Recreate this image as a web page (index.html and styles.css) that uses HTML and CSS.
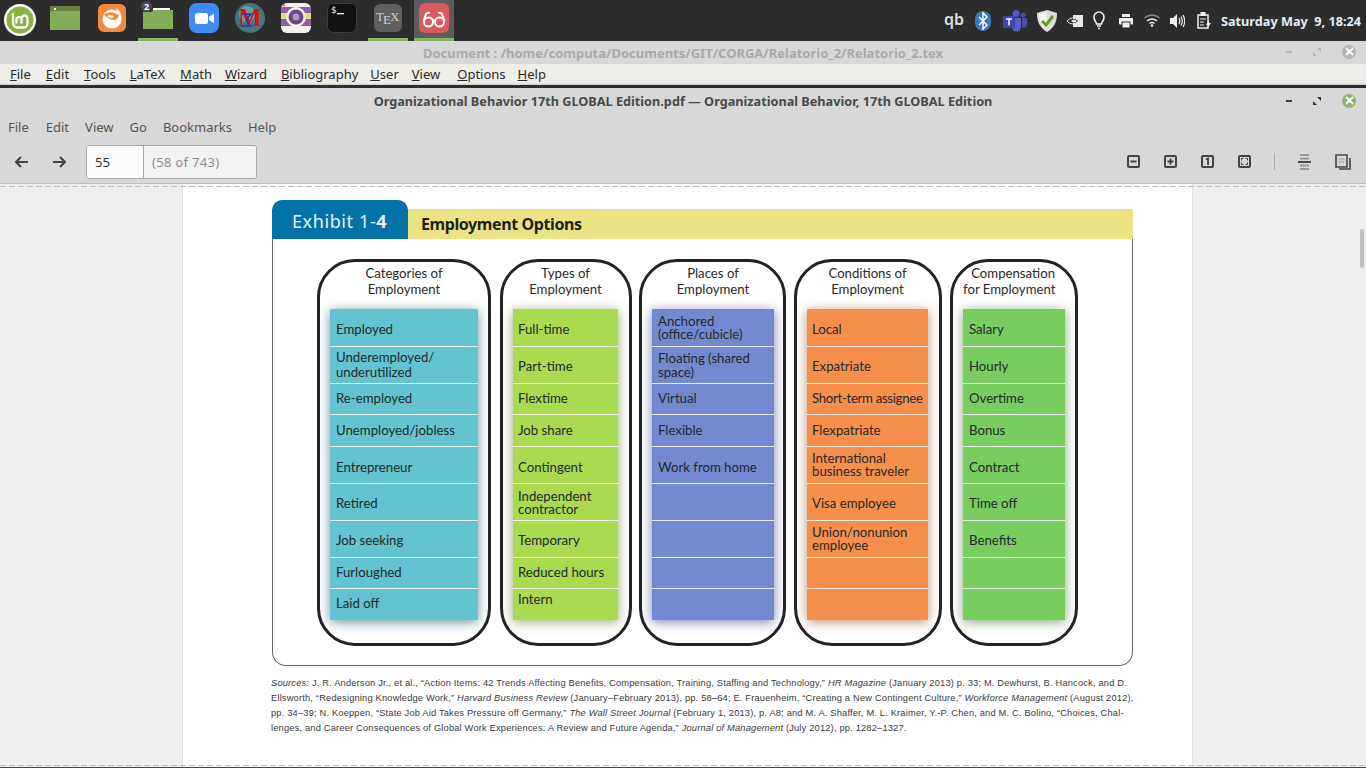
FILE: index.html
```html
<!DOCTYPE html>
<html lang="en">
<head>
  <meta charset="UTF-8" />
  <meta name="viewport" content="width=device-width, initial-scale=1.0"/>
  <title>Organizational Behavior 17th GLOBAL Edition.pdf</title>
  <link rel="stylesheet" href="styles.css">
</head>
<body>

  <!-- panel -->
  <div class="panel">
    <div class="dock">
      <div class="dock-item dock-mint">
        <svg width="34" height="34" viewBox="0 0 34 34"><circle cx="17" cy="17" r="16" fill="#fff"/><circle cx="17" cy="17" r="13.6" fill="#86b343"/><path d="M10 10v10a4.5 4.5 0 0 0 4.5 4.5h6a4 4 0 0 0 4-4v-5a3 3 0 0 0-6 0v5m0-5a3 3 0 0 0-5 0v5" fill="none" stroke="#fff" stroke-width="2.3"/></svg>
      </div>
      <div class="dock-item dock-files">
        <svg width="30" height="24" viewBox="0 0 30 24"><rect width="30" height="24" fill="#86ab57"/><rect width="30" height="5" fill="#64823f"/><rect x="4" y="2" width="2" height="2" fill="#fff"/></svg>
      </div>
      <div class="dock-item">
        <svg width="30" height="30" viewBox="0 0 30 30"><rect x="1" y="1" width="28" height="28" rx="6" fill="#f18a3a"/><circle cx="15" cy="16" r="9.5" fill="#fff"/><path d="M19 5q6 4 5.5 11l-3-4z" fill="#fff"/><path d="M7 11q7-4 15 1-1 5-6 5-6-1-9-6z" fill="#f18a3a"/><path d="M10 13q4-2 7 0-1 2-3 2-2 0-4-2z" fill="#fff"/></svg>
      </div>
      <div class="dock-item dock-running dock-badged">
        <svg width="30" height="24" viewBox="0 0 30 24"><path d="M10 2h17v3H10z" fill="#fff"/><path d="M0 6h8l3-2h19v19H0z" fill="#86ab57"/></svg>
        <span class="dock-badge">2</span>
      </div>
      <div class="dock-item">
        <svg width="30" height="30" viewBox="0 0 30 30"><rect width="30" height="30" rx="8" fill="#3d8cf5"/><rect x="6" y="10" width="13" height="11" rx="2.5" fill="#fff"/><path d="M20 14l5-3.5v10L20 17z" fill="#fff"/></svg>
      </div>
      <div class="dock-item">
        <svg width="32" height="32" viewBox="0 0 32 32"><circle cx="16" cy="16" r="15" fill="#47737f"/><circle cx="13" cy="12" r="8" fill="#8fb0b8" opacity=".6"/><text x="16" y="24" text-anchor="middle" class="svg-maxima" fill="#d41414">M</text><path d="M8 12h9l-5 6 5 6H7" fill="none" stroke="#1c3fa8" stroke-width="1.5"/></svg>
      </div>
      <div class="dock-item">
        <svg width="30" height="30" viewBox="0 0 30 30"><rect width="30" height="30" rx="6" fill="#f4f1ea"/><rect y="4" width="30" height="6" fill="#8d5fb0"/><rect y="10" width="30" height="6" fill="#e3dc7f"/><rect y="16" width="30" height="7" fill="#8d5fb0"/><circle cx="15" cy="14" r="10" fill="#f4f1ea"/><circle cx="15" cy="14" r="7.5" fill="#6a4a86"/><circle cx="15" cy="14" r="3.5" fill="#ad97c2"/><circle cx="3" cy="2.5" r="1.2" fill="#e86a6a"/></svg>
      </div>
      <div class="dock-item">
        <svg width="30" height="30" viewBox="0 0 30 30"><rect x=".5" y=".5" width="29" height="29" rx="6" fill="#111" stroke="#3e3e3e"/><text x="4" y="10" class="svg-term" fill="#fff">$</text><rect x="10" y="10" width="7" height="1.3" fill="#fff"/></svg>
      </div>
      <div class="dock-item dock-running">
        <svg width="30" height="30" viewBox="0 0 30 30"><rect x="1" y="1" width="28" height="28" rx="6" fill="#5f5f5f"/><text x="3" y="18" class="svg-tex" fill="#cfcfcf">T<tspan dy="3" dx="-1">E</tspan><tspan dy="-3" dx="-1">X</tspan></text></svg>
      </div>
      <div class="dock-item dock-running dock-active">
        <svg width="30" height="30" viewBox="0 0 30 30"><rect width="30" height="30" rx="6" fill="#d9595f"/><g fill="none" stroke="#fff" stroke-width="2"><circle cx="9.5" cy="19" r="4.5"/><circle cx="20.5" cy="19" r="4.5"/><path d="M13.5 18q1.5-1 3 0M4.5 18l2.5-7q1-1.5 4-1M25.5 18l-2.5-7q-1-1.5-4-1"/></g></svg>
      </div>
    </div>

    <div class="tray">
      <span class="tray-qb">qb</span>
      <svg class="tray-bt" width="16" height="20" viewBox="0 0 16 20"><rect width="16" height="20" rx="8" fill="#3a77b8"/><path d="M4 6l8 8-4 4V2l4 4-8 8" fill="none" stroke="#fff" stroke-width="1.4"/></svg>
      <svg class="tray-teams" width="24" height="22" viewBox="0 0 24 22"><circle cx="13" cy="3.5" r="3.5" fill="#5559c8"/><circle cx="20" cy="5" r="2.5" fill="#4a4ea8"/><path d="M9 8h9v9a4.5 4.5 0 0 1-9 0z" fill="#5a5fc8"/><path d="M19 8h5v7a3 3 0 0 1-5 2z" fill="#4a4ea8"/><rect y="6" width="12" height="12" rx="1" fill="#3f44b0"/><path d="M3 9h6M6 9v6.5" stroke="#fff" stroke-width="1.5"/></svg>
      <svg class="tray-shield" width="20" height="22" viewBox="0 0 20 22"><path d="M10 0l10 3c0 9-3 15-10 19C3 18 0 12 0 3z" fill="#ddd"/><path d="M10 2l-8 2.5c0 7 3 12 8 15z" fill="#f2f2f2"/><path d="M5 11l4 4 7-9" fill="none" stroke="#6a9a22" stroke-width="3"/></svg>
      <svg class="tray-nvidia" width="16" height="12" viewBox="0 0 16 12"><rect x="6" width="10" height="12" fill="#e8e8e8"/><path d="M0 6q5-6 12 0-7 6-12 0z" fill="#2c2c2c" stroke="#e8e8e8"/><path d="M4 6q3-3 6 0-3 3-6 0z" fill="#e8e8e8"/></svg>
      <svg class="tray-bulb" width="12" height="19" viewBox="0 0 12 19"><path d="M3.5 13c0-2-2.5-3-2.5-7a5 5 0 0 1 10 0c0 4-2.5 5-2.5 7z" fill="none" stroke="#f0f0f0" stroke-width="1.6"/><path d="M4 15h4M5 17.5h2" stroke="#f0f0f0" stroke-width="1.4"/></svg>
      <svg class="tray-print" width="14" height="14" viewBox="0 0 14 14"><rect x="3" width="8" height="3" fill="#f0f0f0"/><rect y="4" width="14" height="6.5" rx="1" fill="#f0f0f0"/><rect x="3" y="8" width="8" height="6" fill="#f0f0f0" stroke="#2c2c2c"/></svg>
      <svg class="tray-wifi" width="16" height="13" viewBox="0 0 16 13"><g fill="none" stroke-width="1.5"><path d="M.5 4q7.5-6 15 0" stroke="#8a8a8a"/><path d="M3 7q5-4 10 0" stroke="#e8e8e8"/><path d="M5.5 9.5q2.5-2 5 0" stroke="#e8e8e8"/></g><circle cx="8" cy="11.5" r="1.3" fill="#e8e8e8"/></svg>
      <svg class="tray-sound" width="15" height="14" viewBox="0 0 15 14"><path d="M0 4h3l4-4v14l-4-4H0z" fill="#f0f0f0"/><path d="M9 4q1.5 3 0 6M11 2.5q2.5 4.5 0 9M13 1q3.5 6 0 12" fill="none" stroke="#f0f0f0" stroke-width="1.2"/></svg>
      <svg class="tray-clip" width="15" height="17" viewBox="0 0 15 17"><path d="M1 3h10v13H1z" fill="none" stroke="#f0f0f0" stroke-width="1.5"/><rect x="3.5" y="0" width="5" height="4" fill="#f0f0f0"/><path d="M3 7h6M3 10h4M3 13h4" stroke="#f0f0f0"/><path d="M12 8l-3 5h2l-1 4 4-6h-2z" fill="#f0f0f0"/></svg>
      <span class="tray-clock">Saturday May &nbsp;9, 18:24</span>
    </div>
  </div>

  <!-- editor window behind -->
  <div class="back-window">
    <div class="titlebar back-title">
      <span>Document : /home/computa/Documents/GIT/CORGA/Relatorio_2/Relatorio_2.tex</span>
      <div class="win-btns win-btns-back">
        <i class="btn-min"></i>
        <svg width="10" height="10" viewBox="0 0 10 10"><path d="M5 1h4v4zM1 5v4h4z" fill="currentColor"/></svg>
        <b class="btn-close"><svg width="9" height="9" viewBox="0 0 9 9"><path d="M1 1l7 7M8 1l-7 7" stroke="#fff" stroke-width="2"/></svg></b>
      </div>
    </div>
    <div class="back-menu">
      <span class="m-file"><u>F</u>ile</span>
      <span class="m-edit"><u>E</u>dit</span>
      <span class="m-tools"><u>T</u>ools</span>
      <span class="m-latex"><u>L</u>aTeX</span>
      <span class="m-math"><u>M</u>ath</span>
      <span class="m-wizard"><u>W</u>izard</span>
      <span class="m-bib"><u>B</u>ibliography</span>
      <span class="m-user"><u>U</u>ser</span>
      <span class="m-view"><u>V</u>iew</span>
      <span class="m-opt"><u>O</u>ptions</span>
      <span><u>H</u>elp</span>
    </div>
  </div>

  <!-- pdf reader -->
  <div class="reader">
    <div class="titlebar reader-title">
      <span>Organizational Behavior 17th GLOBAL Edition.pdf — Organizational Behavior, 17th GLOBAL Edition</span>
      <div class="win-btns">
        <i class="btn-min"></i>
        <svg width="10" height="10" viewBox="0 0 10 10"><path d="M5 1h4v4zM1 5v4h4z" fill="currentColor"/></svg>
        <b class="btn-close btn-close-on"><svg width="9" height="9" viewBox="0 0 9 9"><path d="M1 1l7 7M8 1l-7 7" stroke="#fff" stroke-width="2"/></svg></b>
      </div>
    </div>

    <div class="reader-menu">
      <span class="rm-first">File</span><span>Edit</span><span>View</span><span>Go</span><span>Bookmarks</span><span>Help</span>
    </div>

    <div class="toolbar">
      <div class="nav-arrows">
        <svg width="14" height="12" viewBox="0 0 14 12"><path d="M6 1L1 6l5 5M1 6h12" fill="none" stroke="#444" stroke-width="2"/></svg>
        <svg width="14" height="12" viewBox="0 0 14 12"><path d="M8 1l5 5-5 5M13 6H1" fill="none" stroke="#444" stroke-width="2"/></svg>
      </div>
      <div class="page-entry">
        <span class="page-num">55</span>
        <span class="page-of">(58 of 743)</span>
      </div>
      <div class="tool-icons">
        <svg width="13" height="13" viewBox="0 0 13 13"><rect x="1" y="1" width="11" height="11" rx="1" fill="none" stroke="#444" stroke-width="2"/><path d="M3.5 6.5h6" stroke="#444" stroke-width="2"/></svg>
        <svg width="13" height="13" viewBox="0 0 13 13"><rect x="1" y="1" width="11" height="11" rx="1" fill="none" stroke="#444" stroke-width="2"/><path d="M3.5 6.5h6M6.5 3.5v6" stroke="#444" stroke-width="2"/></svg>
        <svg width="13" height="13" viewBox="0 0 13 13"><rect x="1" y="1" width="11" height="11" rx="1" fill="none" stroke="#444" stroke-width="2"/><path d="M5 4.5l2-1v6.5" fill="none" stroke="#444" stroke-width="1.8"/></svg>
        <svg width="13" height="13" viewBox="0 0 13 13"><rect x="1" y="1" width="11" height="11" rx="1" fill="none" stroke="#444" stroke-width="2"/><path d="M3.5 5.5v-2h2M7.5 3.5h2v2M9.5 7.5v2h-2M5.5 9.5h-2v-2" fill="none" stroke="#444"/></svg>
        <span class="tool-sep"></span>
        <svg width="13" height="16" viewBox="0 0 13 16"><path d="M2 1h9M2 4.5h9M2 11.5h9M2 15h9" stroke="#999" stroke-width="2"/><path d="M0 8h13" stroke="#444" stroke-width="2"/></svg>
        <svg width="16" height="16" viewBox="0 0 16 16"><path d="M1 1h11v12H1z" fill="none" stroke="#444" stroke-width="1.6"/><path d="M15 4v11H4" fill="none" stroke="#444" stroke-width="1.6"/><path d="M3.5 5h6M3.5 8h6" stroke="#999"/></svg>
      </div>
    </div>

    <div class="viewer">
      <div class="dash dash-top"></div>
      <div class="scroll-thumb"></div>
      <div class="page">

        <div class="exhibit-head">
          <div class="exhibit-tab">Exhibit 1-<b>4</b></div>
          <div class="exhibit-name">Employment Options</div>
        </div>

        <div class="exhibit-frame">
          <div class="col col-cat">
            <h4>Categories of<br>Employment</h4>
            <ul class="rows rows-teal">
              <li>Employed</li>
              <li class="two under">Underemployed/<br>underutilized</li>
              <li>Re-employed</li>
              <li>Unemployed/jobless</li>
              <li>Entrepreneur</li>
              <li>Retired</li>
              <li>Job seeking</li>
              <li>Furloughed</li>
              <li>Laid off</li>
            </ul>
          </div>
          <div class="col col-types">
            <h4>Types of<br>Employment</h4>
            <ul class="rows rows-lime">
              <li>Full-time</li>
              <li>Part-time</li>
              <li>Flextime</li>
              <li>Job share</li>
              <li>Contingent</li>
              <li class="two indep">Independent<br>contractor</li>
              <li>Temporary</li>
              <li>Reduced hours</li>
              <li class="raised">Intern</li>
            </ul>
          </div>
          <div class="col col-places">
            <h4>Places of<br>Employment</h4>
            <ul class="rows rows-blue">
              <li class="two anchored">Anchored<br>(office/cubicle)</li>
              <li class="two floating">Floating (shared<br>space)</li>
              <li>Virtual</li>
              <li>Flexible</li>
              <li>Work from home</li>
              <li></li>
              <li></li>
              <li></li>
              <li></li>
            </ul>
          </div>
          <div class="col col-cond">
            <h4>Conditions of<br>Employment</h4>
            <ul class="rows rows-orange">
              <li>Local</li>
              <li>Expatriate</li>
              <li class="short">Short-term assignee</li>
              <li>Flexpatriate</li>
              <li class="two">International<br>business traveler</li>
              <li>Visa employee</li>
              <li class="two">Union/nonunion<br>employee</li>
              <li></li>
              <li></li>
            </ul>
          </div>
          <div class="col col-comp">
            <h4>Compensation<br>for Employment</h4>
            <ul class="rows rows-green">
              <li>Salary</li>
              <li>Hourly</li>
              <li>Overtime</li>
              <li>Bonus</li>
              <li>Contract</li>
              <li>Time off</li>
              <li>Benefits</li>
              <li></li>
              <li></li>
            </ul>
          </div>
        </div>

        <p class="sources">
          <em>Sources:</em> J. R. Anderson Jr., et al., “Action Items: 42 Trends Affecting Benefits, Compensation, Training, Staffing and Technology,” <em>HR Magazine</em> (January 2013) p. 33; M. Dewhurst, B. Hancock, and D.<br>
          Ellsworth, “Redesigning Knowledge Work,” <em>Harvard Business Review</em> (January–February 2013), pp. 58–64; E. Frauenheim, “Creating a New Contingent Culture,” <em>Workforce Management</em> (August 2012),<br>
          pp. 34–39; N. Koeppen, “State Job Aid Takes Pressure off Germany,” <em>The Wall Street Journal</em> (February 1, 2013), p. A8; and M. A. Shaffer, M. L. Kraimer, Y.-P. Chen, and M. C. Bolino, “Choices, Chal-<br>
          lenges, and Career Consequences of Global Work Experiences: A Review and Future Agenda,” <em>Journal of Management</em> (July 2012), pp. 1282–1327.
        </p>
      </div>
      <div class="dash dash-bottom"></div>
    </div>
  </div>

</body>
</html>
```

FILE: styles.css
```css
* {
  box-sizing: border-box;
}

html, body {
  margin: 0;
  height: 768px;
  overflow: hidden;
}

body {
  font-family: "Noto Sans", sans-serif;
  background: #d8d8d8;
}

/* panel */
.panel {
  height: 41px;
  background: #2c2c2c;
  display: flex;
  justify-content: space-between;
  color: #f0f0f0;
}

.dock {
  display: flex;
  gap: 6px;
}

.dock-item {
  position: relative;
  width: 40px;
  height: 41px;
  display: flex;
  align-items: center;
  justify-content: center;
  padding-bottom: 3px;
  border-bottom: 3px solid transparent;
}

.dock-mint {
  padding-bottom: 1px;
  border-bottom: 0;
}

.dock-files {
  margin-left: -1px;
  margin-right: 1px;
}

.dock-running {
  border-bottom-color: #8cb561;
}

.dock-active {
  background: #5c5c5c;
}

.dock-badge {
  position: absolute;
  left: 3px;
  top: 1px;
  width: 11px;
  height: 11px;
  border-radius: 50%;
  background: #454b54;
  font-size: 9px;
  line-height: 11px;
  font-weight: 700;
  text-align: center;
  color: #fff;
}

.svg-maxima {
  font-family: "Liberation Serif", serif;
  font-size: 25px;
  font-weight: 700;
}

.svg-term {
  font-family: "DejaVu Sans Mono", monospace;
  font-size: 9px;
}

.svg-tex {
  font-family: "Liberation Serif", serif;
  font-size: 13px;
}

.tray {
  display: flex;
  align-items: center;
  padding-right: 3px;
}

.tray-qb {
  font-size: 16px;
  font-weight: 600;
  color: #ddd;
  width: 18px;
  margin-right: 13px;
  line-height: 1;
  padding-bottom: 3px;
}

.tray-bt { margin-right: 12px; }
.tray-teams { margin-right: 10px; }
.tray-shield { margin-right: 10px; }
.tray-nvidia { margin-right: 10px; }
.tray-bulb { margin-right: 14px; }
.tray-print { margin-right: 11px; }
.tray-wifi { margin-right: 10px; }
.tray-sound { margin-right: 12px; }
.tray-clip { margin-right: 9px; }

.tray-clock {
  font-size: 12.7px;
  font-weight: 700;
  color: #e4edf5;
  white-space: nowrap;
  width: 142px;
}

/* title bars */
.titlebar {
  position: relative;
  display: flex;
  align-items: center;
  justify-content: center;
  font-weight: 700;
}

.win-btns {
  position: absolute;
  right: 10px;
  top: 0;
  bottom: 0;
  width: 70px;
  display: flex;
  align-items: center;
  justify-content: space-between;
  color: #3c3c3c;
}

.win-btns-back {
  color: #b4b4b4;
  bottom: 2px;
}

.btn-min {
  width: 6px;
  height: 2px;
  background: currentColor;
}

.btn-close {
  width: 14px;
  height: 14px;
  border-radius: 50%;
  background: #b5b5b5;
  display: flex;
  align-items: center;
  justify-content: center;
}

.btn-close-on {
  background: #8fb56c;
}

.back-window {
  height: 47px;
}

.back-title {
  height: 23px;
  padding-top: 1px;
  font-size: 13px;
  color: #a9a9a9;
}

.back-menu {
  height: 24px;
  background: #efede8;
  border-bottom: 3px solid #2e2e2e;
  box-shadow: inset 0 -2px 2px -1px #ccc;
  display: flex;
  align-items: center;
  padding: 0 0 1px 10px;
  font-size: 13px;
  color: #2a2a2a;
}

.m-file { margin-right: 15px; }
.m-edit { margin-right: 15px; }
.m-tools { margin-right: 14px; }
.m-latex { margin-right: 15px; }
.m-math { margin-right: 13px; }
.m-wizard { margin-right: 14px; }
.m-bib { margin-right: 12px; }
.m-user { margin-right: 13px; }
.m-view { margin-right: 17px; }
.m-opt { margin-right: 12px; }

/* reader */
.reader-title {
  height: 25px;
  padding-top: 1px;
  font-size: 12.7px;
  color: #4a4a4a;
}

.reader-menu {
  height: 27px;
  display: flex;
  align-items: center;
  gap: 16px;
  padding-left: 8px;
  font-size: 13px;
  color: #555;
}

.rm-first {
  margin-right: 1px;
}

.toolbar {
  height: 44px;
  display: flex;
  align-items: center;
  padding-left: 15px;
  border-bottom: 1px solid #bcbcbc;
}

.nav-arrows {
  display: flex;
  gap: 23px;
  margin-right: 20px;
}

.page-entry {
  display: flex;
  width: 171px;
  height: 34px;
  border: 1px solid #a9a9a9;
  border-radius: 3px;
  font-size: 13px;
  line-height: 32px;
  overflow: hidden;
}

.page-num {
  width: 57px;
  padding-left: 8px;
  background: #fbfbfb;
  border-right: 1px solid #a9a9a9;
  color: #333;
}

.page-of {
  flex: 1;
  padding-left: 8px;
  background: #f2f2f2;
  color: #8c8c8c;
  letter-spacing: .3px;
}

.tool-icons {
  margin-left: auto;
  display: flex;
  align-items: center;
  gap: 24px;
  padding-right: 15px;
}

.tool-sep {
  width: 1px;
  height: 17px;
  background: #a8a8a8;
  margin: 0 -1px;
}

/* pdf area */
.viewer {
  position: relative;
  height: 584px;
  background: #efefef;
  overflow: hidden;
  padding-left: 182px;
}

.dash {
  position: absolute;
  left: 0;
  right: 0;
  height: 1px;
  background: repeating-linear-gradient(90deg, #bdbdbd 0 6px, transparent 6px 9px);
  z-index: 2;
}

.dash-top {
  top: 2px;
}

.dash-bottom {
  bottom: 2px;
  box-shadow: 0 2px 0 #444;
}

.scroll-thumb {
  position: absolute;
  right: 2px;
  top: 45px;
  width: 4px;
  height: 39px;
  border-radius: 2px;
  background: #c0c0c0;
}

.page {
  width: 1011px;
  height: 584px;
  background: #fff;
  border-left: 1px solid #e0e0e0;
  border-right: 1px solid #e0e0e0;
  padding: 16px 0 0 89px;
}

.exhibit-head {
  display: flex;
  align-items: flex-end;
  width: 861px;
  height: 39px;
}

.exhibit-tab {
  width: 136px;
  height: 39px;
  background: #0272a7;
  border-radius: 10px 10px 0 0;
  color: #e9f4f8;
  font-size: 18px;
  line-height: 43px;
  padding-left: 20px;
  letter-spacing: .6px;
}

.exhibit-name {
  flex: 1;
  height: 30px;
  background: #ebe382;
  color: #1e1e1e;
  font-size: 16px;
  font-weight: 700;
  line-height: 30px;
  padding-left: 13px;
  letter-spacing: -.4px;
}

.exhibit-frame {
  width: 861px;
  height: 427px;
  border: 1px solid #666;
  border-top: 0;
  border-radius: 0 0 14px 14px;
  padding: 20px 0 0 44px;
  display: flex;
  gap: 8px;
}

.col {
  height: 387px;
  border: 3px solid #232323;
  border-radius: 38px;
  padding: 0 10px;
  font-family: "Lato", sans-serif;
}

.col h4 {
  margin: 0;
  height: 47px;
  padding-top: 3px;
  font-size: 13.2px;
  font-weight: 400;
  line-height: 16px;
  text-align: center;
  white-space: nowrap;
  color: #2a2a2a;
}

.col-cat { width: 174px; }
.col-types { width: 132px; margin-left: 1px; padding-right: 11px; }
.col-places { width: 147px; margin-left: -1px; padding-right: 9px; }
.col-cond { width: 148px; padding-right: 11px; }
.col-comp { width: 128px; }

.col-comp h4 {
  text-align: right;
  margin-right: 10px;
}

.rows {
  --pad: 6px;
  list-style: none;
  margin: 0;
  padding: 0;
  height: 311px;
  display: grid;
  grid-template-rows: 38px 37px 31px 32px 37px 37px 37px 31px 31px;
  font-size: 13.2px;
  color: #1f2a2d;
}

.rows li {
  display: flex;
  align-items: center;
  white-space: nowrap;
  padding: 2px 0 0 var(--pad);
  border-bottom: 1px solid rgba(255, 255, 255, .85);
}

.rows li:nth-child(1) { padding-top: 3px; }
.rows li:nth-child(3) { padding: 0 0 2px var(--pad); }
.rows li:nth-child(4) { padding: 0 0 1px var(--pad); }
.rows li:nth-child(5) { padding-top: 4px; }
.rows li:nth-child(8) { padding: 0 0 2px var(--pad); }
.rows li:nth-child(9) { padding: 0 0 3px var(--pad); border-bottom: 0; }
.rows li.raised { padding-bottom: 11px; }

.rows li.short { letter-spacing: -.3px; }

.rows li.two {
  display: block;
  line-height: 13px;
  padding-top: 5px;
}

.rows li.anchored { padding-top: 6px; }
.rows li.indep { padding-top: 6px; }
.rows li.under { line-height: 15px; padding-top: 3px; }
.rows li.floating { line-height: 14px; padding-top: 4px; }

.rows-lime, .rows-orange { --pad: 5px; }

.rows-teal { background: #63c3d1; box-shadow: 0 2px 11px rgba(40, 100, 115, .7); }
.rows-lime { background: #a9da50; box-shadow: 0 2px 11px rgba(95, 125, 45, .65); }
.rows-blue { background: #7289cf; box-shadow: 0 2px 11px rgba(60, 75, 150, .7); }
.rows-orange { background: #f68f4c; box-shadow: 0 2px 11px rgba(150, 90, 50, .65); }
.rows-green { background: #78cd5e; box-shadow: 0 2px 11px rgba(70, 120, 55, .65); }

.sources {
  margin: 10px 0 0 -1px;
  width: 880px;
  font-family: "Liberation Sans", sans-serif;
  font-size: 9.3px;
  line-height: 15px;
  color: #3a3a3a;
  white-space: nowrap;
  letter-spacing: .18px;
}
```
